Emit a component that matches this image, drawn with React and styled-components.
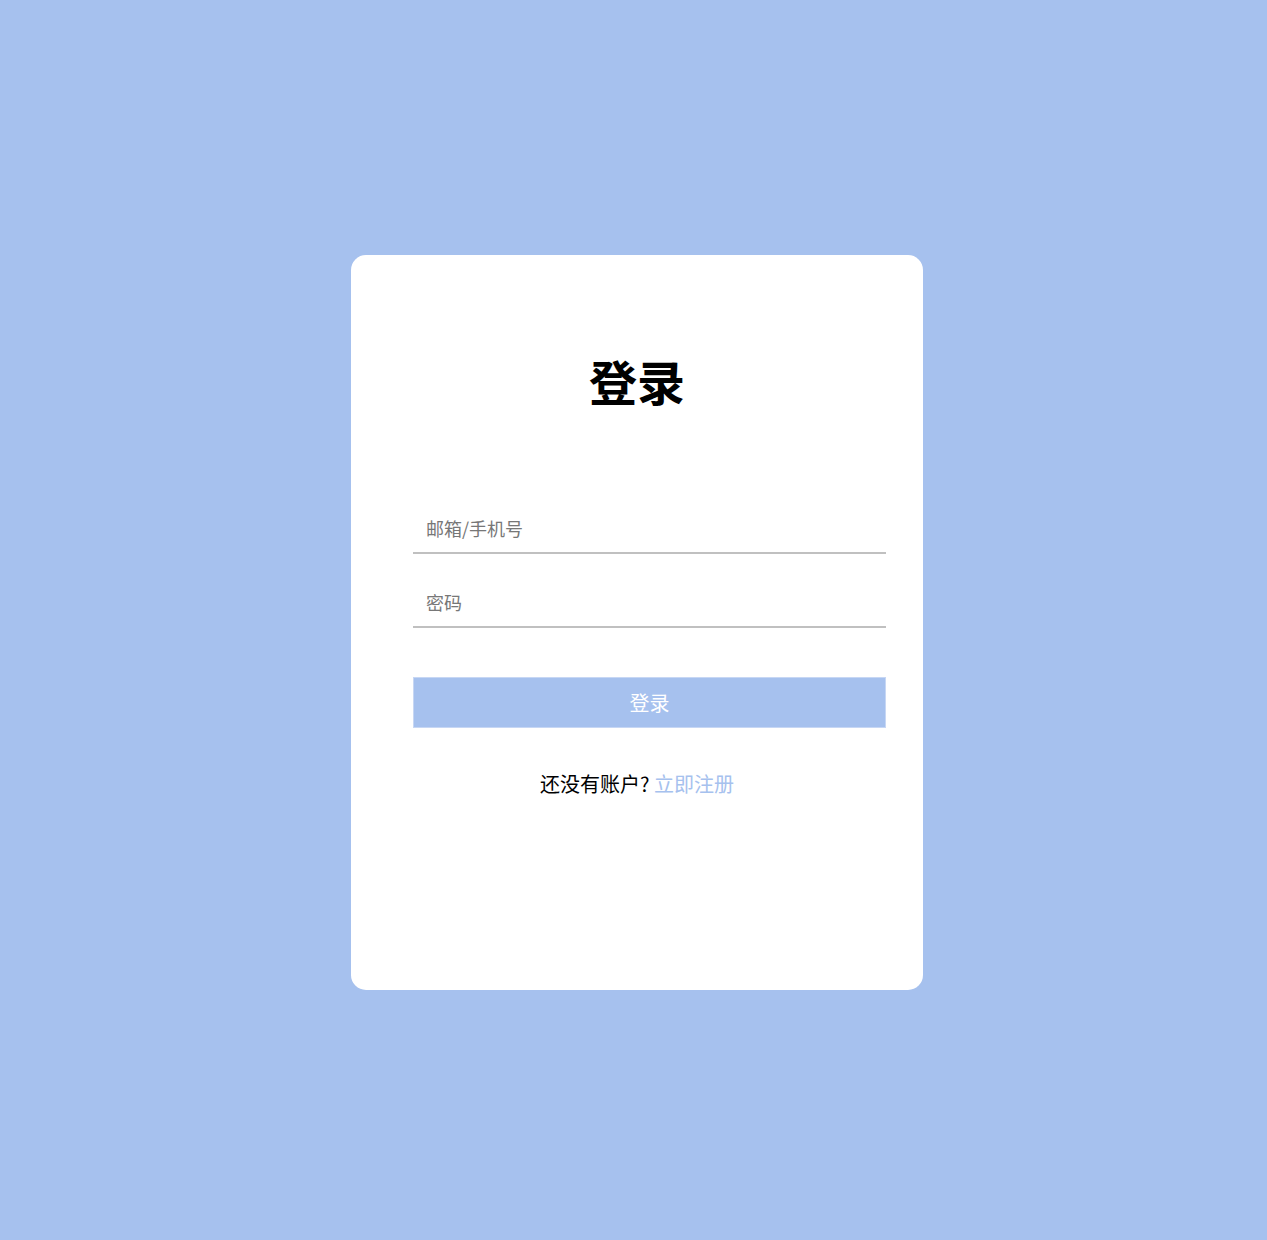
import styled, { createGlobalStyle } from "styled-components";

const GlobalStyle = createGlobalStyle`
  html, body {
    margin: 0;
    padding: 0;
  }
  body {
    background: #a6c1ee;
    font-family: "Noto Sans CJK SC", "Noto Sans", sans-serif;
  }
`;

function App() {
  return (
    <>
      <GlobalStyle />
      <Page>
        <Card>
          <Title>登录</Title>
          <Form onSubmit={(e) => e.preventDefault()}>
            <Input type="text" placeholder="邮箱/手机号" />
            <Input type="password" placeholder="密码" />
            <SubmitBtn type="submit">登录</SubmitBtn>
          </Form>
          <Footer>
            还没有账户? <RegisterLink href="#">立即注册</RegisterLink>
          </Footer>
        </Card>
      </Page>
    </>
  );
}

const Page = styled.div`
  min-height: 1240px;
  box-sizing: border-box;
  padding: 255px 0 0 351px;
  background: #a6c1ee;
`;

const Card = styled.div`
  width: 572px;
  height: 735px;
  box-sizing: border-box;
  padding: 101px 37px 0 62px;
  background: #fff;
  border-radius: 15px;
`;

const Title = styled.h1`
  margin: 0 0 100px -25px;
  font-size: 48px;
  line-height: 48px;
  font-weight: bold;
  text-align: center;
  color: #000;
`;

const Form = styled.form`
  display: flex;
  flex-direction: column;
`;

const Input = styled.input`
  width: 473px;
  height: 50px;
  box-sizing: border-box;
  padding: 0 12px 0 13px;
  margin-bottom: 24px;
  border: none;
  border-bottom: 2px solid #c0c0c0;
  outline: none;
  font-family: inherit;
  font-size: 18px;
  color: #333;
  background: transparent;

  &::placeholder {
    color: #777;
  }

  &:last-of-type {
    margin-bottom: 49px;
  }
`;

const SubmitBtn = styled.button`
  width: 473px;
  height: 51px;
  box-sizing: border-box;
  border: 1px solid #c7d7f4;
  background: #a6c1ee;
  color: #fff;
  font-family: inherit;
  font-size: 20px;
  cursor: pointer;
`;

const Footer = styled.p`
  margin: 44px 0 0 -25px;
  font-size: 20px;
  line-height: 24px;
  text-align: center;
  color: #000;
`;

const RegisterLink = styled.a`
  color: #a6c1ee;
  text-decoration: none;
`;

export default App;
